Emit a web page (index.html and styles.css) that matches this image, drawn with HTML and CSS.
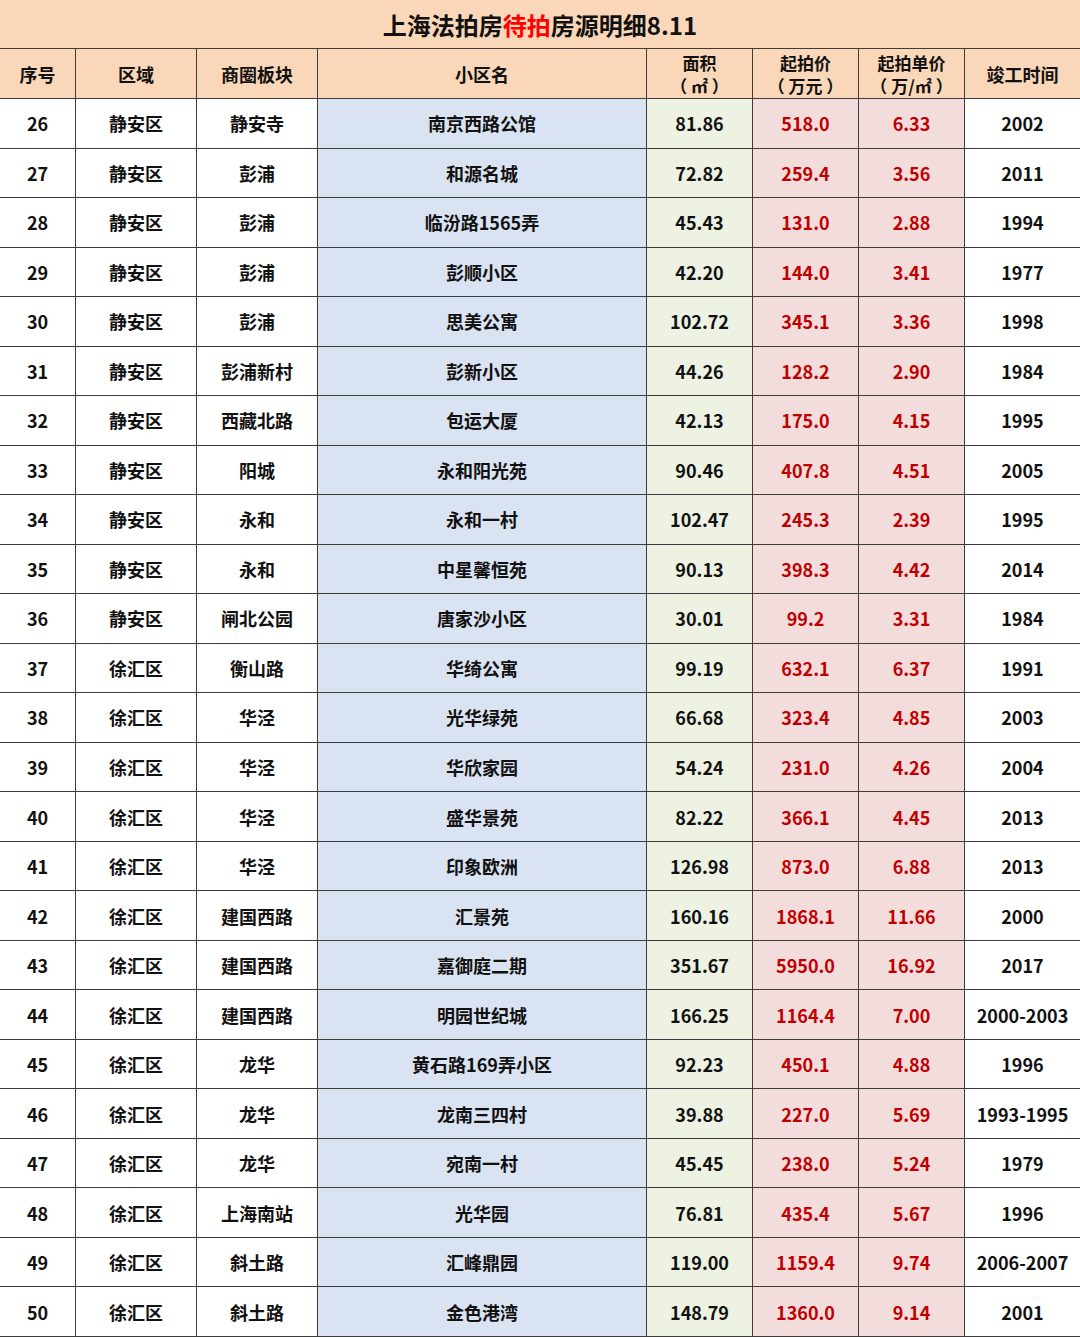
FILE: index.html
```html
<!DOCTYPE html>
<html lang="zh-CN">
<head>
<meta charset="utf-8">
<title>上海法拍房待拍房源明细8.11</title>
<link rel="stylesheet" href="styles.css">
</head>
<body>
<div class="sheet">
  <div class="title">上海法拍房<span class="hl">待拍</span>房源明细8.11</div>

  <div class="c head">序号</div>
  <div class="c head">区域</div>
  <div class="c head">商圈板块</div>
  <div class="c head">小区名</div>
  <div class="c head two"><span class="ln">面积</span><span class="ln">（ ㎡ ）</span></div>
  <div class="c head two"><span class="ln">起拍价</span><span class="ln">（ 万元 ）</span></div>
  <div class="c head two"><span class="ln">起拍单价</span><span class="ln">（ 万/㎡ ）</span></div>
  <div class="c head last">竣工时间</div>

  <div class="c">26</div><div class="c">静安区</div><div class="c">静安寺</div><div class="c blue">南京西路公馆</div><div class="c green">81.86</div><div class="c pink">518.0</div><div class="c pink">6.33</div><div class="c last">2002</div>
  <div class="c">27</div><div class="c">静安区</div><div class="c">彭浦</div><div class="c blue">和源名城</div><div class="c green">72.82</div><div class="c pink">259.4</div><div class="c pink">3.56</div><div class="c last">2011</div>
  <div class="c">28</div><div class="c">静安区</div><div class="c">彭浦</div><div class="c blue">临汾路1565弄</div><div class="c green">45.43</div><div class="c pink">131.0</div><div class="c pink">2.88</div><div class="c last">1994</div>
  <div class="c">29</div><div class="c">静安区</div><div class="c">彭浦</div><div class="c blue">彭顺小区</div><div class="c green">42.20</div><div class="c pink">144.0</div><div class="c pink">3.41</div><div class="c last">1977</div>
  <div class="c">30</div><div class="c">静安区</div><div class="c">彭浦</div><div class="c blue">思美公寓</div><div class="c green">102.72</div><div class="c pink">345.1</div><div class="c pink">3.36</div><div class="c last">1998</div>
  <div class="c">31</div><div class="c">静安区</div><div class="c">彭浦新村</div><div class="c blue">彭新小区</div><div class="c green">44.26</div><div class="c pink">128.2</div><div class="c pink">2.90</div><div class="c last">1984</div>
  <div class="c">32</div><div class="c">静安区</div><div class="c">西藏北路</div><div class="c blue">包运大厦</div><div class="c green">42.13</div><div class="c pink">175.0</div><div class="c pink">4.15</div><div class="c last">1995</div>
  <div class="c">33</div><div class="c">静安区</div><div class="c">阳城</div><div class="c blue">永和阳光苑</div><div class="c green">90.46</div><div class="c pink">407.8</div><div class="c pink">4.51</div><div class="c last">2005</div>
  <div class="c">34</div><div class="c">静安区</div><div class="c">永和</div><div class="c blue">永和一村</div><div class="c green">102.47</div><div class="c pink">245.3</div><div class="c pink">2.39</div><div class="c last">1995</div>
  <div class="c">35</div><div class="c">静安区</div><div class="c">永和</div><div class="c blue">中星馨恒苑</div><div class="c green">90.13</div><div class="c pink">398.3</div><div class="c pink">4.42</div><div class="c last">2014</div>
  <div class="c">36</div><div class="c">静安区</div><div class="c">闸北公园</div><div class="c blue">唐家沙小区</div><div class="c green">30.01</div><div class="c pink">99.2</div><div class="c pink">3.31</div><div class="c last">1984</div>
  <div class="c">37</div><div class="c">徐汇区</div><div class="c">衡山路</div><div class="c blue">华绮公寓</div><div class="c green">99.19</div><div class="c pink">632.1</div><div class="c pink">6.37</div><div class="c last">1991</div>
  <div class="c">38</div><div class="c">徐汇区</div><div class="c">华泾</div><div class="c blue">光华绿苑</div><div class="c green">66.68</div><div class="c pink">323.4</div><div class="c pink">4.85</div><div class="c last">2003</div>
  <div class="c">39</div><div class="c">徐汇区</div><div class="c">华泾</div><div class="c blue">华欣家园</div><div class="c green">54.24</div><div class="c pink">231.0</div><div class="c pink">4.26</div><div class="c last">2004</div>
  <div class="c">40</div><div class="c">徐汇区</div><div class="c">华泾</div><div class="c blue">盛华景苑</div><div class="c green">82.22</div><div class="c pink">366.1</div><div class="c pink">4.45</div><div class="c last">2013</div>
  <div class="c">41</div><div class="c">徐汇区</div><div class="c">华泾</div><div class="c blue">印象欧洲</div><div class="c green">126.98</div><div class="c pink">873.0</div><div class="c pink">6.88</div><div class="c last">2013</div>
  <div class="c">42</div><div class="c">徐汇区</div><div class="c">建国西路</div><div class="c blue">汇景苑</div><div class="c green">160.16</div><div class="c pink">1868.1</div><div class="c pink">11.66</div><div class="c last">2000</div>
  <div class="c">43</div><div class="c">徐汇区</div><div class="c">建国西路</div><div class="c blue">嘉御庭二期</div><div class="c green">351.67</div><div class="c pink">5950.0</div><div class="c pink">16.92</div><div class="c last">2017</div>
  <div class="c">44</div><div class="c">徐汇区</div><div class="c">建国西路</div><div class="c blue">明园世纪城</div><div class="c green">166.25</div><div class="c pink">1164.4</div><div class="c pink">7.00</div><div class="c last">2000-2003</div>
  <div class="c">45</div><div class="c">徐汇区</div><div class="c">龙华</div><div class="c blue">黄石路169弄小区</div><div class="c green">92.23</div><div class="c pink">450.1</div><div class="c pink">4.88</div><div class="c last">1996</div>
  <div class="c">46</div><div class="c">徐汇区</div><div class="c">龙华</div><div class="c blue">龙南三四村</div><div class="c green">39.88</div><div class="c pink">227.0</div><div class="c pink">5.69</div><div class="c last">1993-1995</div>
  <div class="c">47</div><div class="c">徐汇区</div><div class="c">龙华</div><div class="c blue">宛南一村</div><div class="c green">45.45</div><div class="c pink">238.0</div><div class="c pink">5.24</div><div class="c last">1979</div>
  <div class="c">48</div><div class="c">徐汇区</div><div class="c">上海南站</div><div class="c blue">光华园</div><div class="c green">76.81</div><div class="c pink">435.4</div><div class="c pink">5.67</div><div class="c last">1996</div>
  <div class="c">49</div><div class="c">徐汇区</div><div class="c">斜土路</div><div class="c blue">汇峰鼎园</div><div class="c green">119.00</div><div class="c pink">1159.4</div><div class="c pink">9.74</div><div class="c last">2006-2007</div>
  <div class="c">50</div><div class="c">徐汇区</div><div class="c">斜土路</div><div class="c blue">金色港湾</div><div class="c green">148.79</div><div class="c pink">1360.0</div><div class="c pink">9.14</div><div class="c last">2001</div>
</div>
</body>
</html>
```

FILE: styles.css
```css
html, body {
  margin: 0;
  padding: 0;
  background: #ffffff;
}

.sheet {
  width: 1080px;
  height: 1337px;
  display: grid;
  grid-template-columns: 76px 121px 121px 329px 106px 106px 106px 115px;
  grid-template-rows: 49px 50px repeat(25, 1fr);
  font-family: "Noto Sans CJK SC", "Noto Sans", sans-serif;
  font-weight: 700;
  color: #111111;
  box-sizing: border-box;
}

.title {
  grid-column: 1 / -1;
  background: #fad7b9;
  border-bottom: 1px solid #3c3c3c;
  display: flex;
  align-items: center;
  justify-content: center;
  font-size: 24px;
}

.title .hl {
  color: #ff0000;
}

.c {
  display: flex;
  align-items: center;
  justify-content: center;
  text-align: center;
  font-size: 18px;
  border-right: 1px solid #3c3c3c;
  border-bottom: 1px solid #3c3c3c;
  box-sizing: border-box;
  white-space: pre;
}

.c.last {
  border-right: none;
}

.head {
  background: #fad7b9;
}

.head.two {
  flex-direction: column;
  font-size: 17px;
}

.head.two .ln {
  display: block;
  height: 23px;
  line-height: 23px;
}

.blue {
  background: #dae3f2;
}

.green {
  background: #edf2e3;
}

.pink {
  background: #f3dcdc;
  color: #c00000;
}
```
